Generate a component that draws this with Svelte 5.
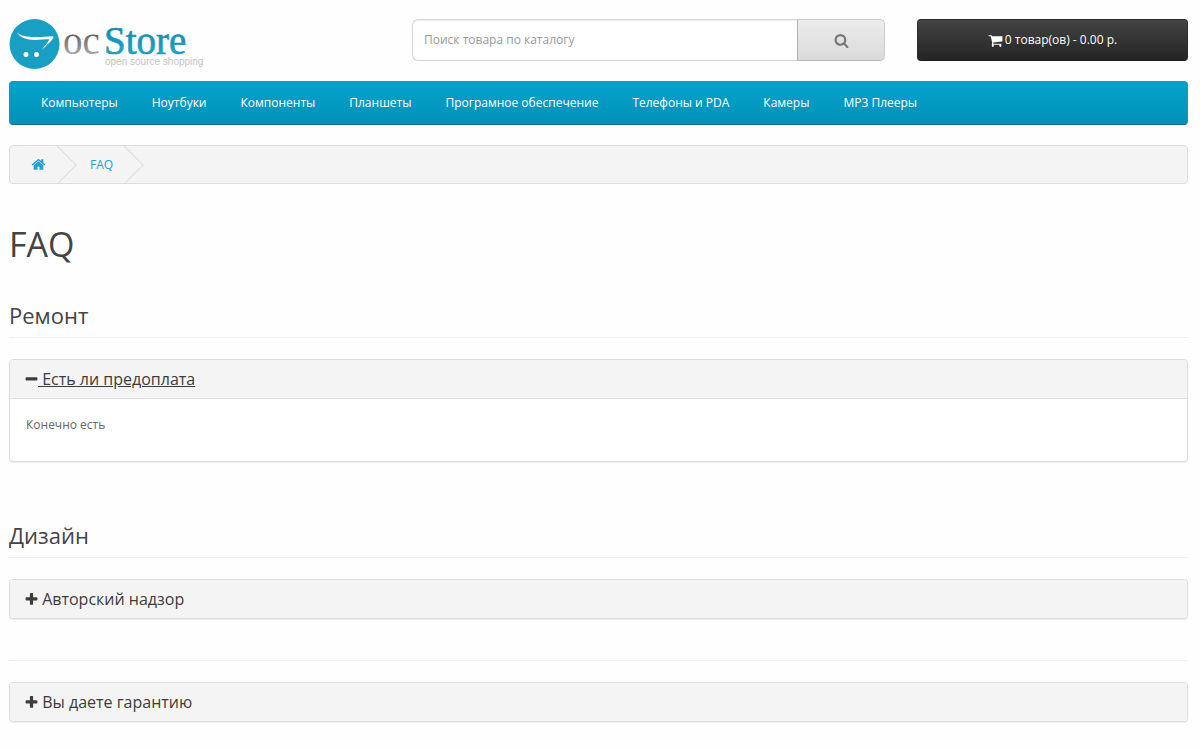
<script>
	const categories = [
		'Компьютеры',
		'Ноутбуки',
		'Компоненты',
		'Планшеты',
		'Програмное обеспечение',
		'Телефоны и PDA',
		'Камеры',
		'MP3 Плееры'
	];

	let sections = $state([
		{ title: 'Ремонт', question: 'Есть ли предоплата', answer: 'Конечно есть', open: true },
		{ title: 'Дизайн', question: 'Авторский надзор', answer: '', open: false },
		{ title: '', question: 'Вы даете гарантию', answer: '', open: false }
	]);

	let search = $state('');

	const icons = {
		search: 'M1216 832q0-185-131.5-316.5T768 384 451.5 515.5 320 832t131.5 316.5T768 1280t316.5-131.5T1216 832zm512 832q0 52-38 90t-90 38q-54 0-90-38l-343-342q-179 124-399 124-143 0-273.5-55.5t-225-150-150-225T64 832t55.5-273.5 150-225 225-150T768 128t273.5 55.5 225 150 150 225T1472 832q0 220-124 399l343 343q37 37 37 90z',
		cart: 'M704 1536q0 52-38 90t-90 38-90-38-38-90 38-90 90-38 90 38 38 90zm896 0q0 52-38 90t-90 38-90-38-38-90 38-90 90-38 90 38 38 90zm128-1088v512q0 24-16.5 42.5T1671 1024L627 1146q13 60 13 70 0 16-24 64h920q26 0 45 19t19 45-19 45-45 19H512q-26 0-45-19t-19-45q0-11 8-31.5t16-36 21.5-40T509 1207L332 384H128q-26 0-45-19t-19-45 19-45 45-19h256q16 0 28.5 6.5T432 278t13 24.5 8 26 5.5 29.5 4.5 26h1201q26 0 45 19t19 45z',
		home: 'M1472 992v480q0 26-19 45t-45 19h-384v-384h-256v384H384q-26 0-45-19t-19-45V992q0-1 .5-3t.5-3l575-474 575 474q1 2 1 6zm223-69l-62 74q-8 9-21 11h-3q-13 0-21-7L896 424l-692 577q-12 8-24 7-13-2-21-11l-62-74q-8-10-7-23.5t11-21.5l719-599q32-26 76-26t76 26l244 204V288q0-14 9-23t23-9h192q14 0 23 9t9 23v408l219 182q10 8 11 21.5t-7 23.5z',
		plus: 'M1600 736v192q0 40-28 68t-68 28h-416v416q0 40-28 68t-68 28H800q-40 0-68-28t-28-68v-416H288q-40 0-68-28t-28-68V736q0-40 28-68t68-28h416V224q0-40 28-68t68-28h192q40 0 68 28t28 68v416h416q40 0 68 28t28 68z',
		minus: 'M1600 736v192q0 40-28 68t-68 28H288q-40 0-68-28t-28-68V736q0-40 28-68t68-28h1216q40 0 68 28t28 68z'
	};
</script>

{#snippet icon(name)}
	<svg class="icon" viewBox="0 0 1792 1792" aria-hidden="true"><path d={icons[name]} /></svg>
{/snippet}

<div class="container">
	<header>
		<a class="logo" href="#home" aria-label="ocStore">
			<svg width="200" height="51" viewBox="0 0 200 51">
				<defs>
					<linearGradient id="grey" x1="0" y1="0" x2="0" y2="1">
						<stop offset="0.3" stop-color="#5c5c5c" />
						<stop offset="0.8" stop-color="#a5a5a5" />
					</linearGradient>
					<linearGradient id="blue" x1="0" y1="0" x2="0" y2="1">
						<stop offset="0.2" stop-color="#1388a8" />
						<stop offset="0.8" stop-color="#1ba6cc" />
					</linearGradient>
				</defs>
				<circle cx="25.5" cy="25" r="25" fill="#1a9fc4" />
				<path d="M8 13.500C12 17 17 18 26 18C33 18 38 17.200 43.500 17.200C45.500 17.600 44.500 19.500 42 22L33 30.800C36 26 39.500 23 40.500 20.300C35 20.300 31 21 26 21C17 20.800 11 18.500 8 13.500Z" fill="#fff" />
				<circle cx="17" cy="35.500" r="2.500" fill="#fff" />
				<circle cx="27.500" cy="35.500" r="2.500" fill="#fff" />
				<text class="serif" x="54" y="35" fill="url(#grey)">oc</text>
				<text class="serif store" x="95" y="35" fill="url(#blue)">Store</text>
				<text class="tagline" x="96" y="46">open source shopping</text>
			</svg>
		</a>
		<form class="search" onsubmit={(e) => e.preventDefault()}>
			<input type="text" aria-label="Поиск" placeholder="Поиск товара по каталогу" bind:value={search} />
			<button type="submit" aria-label="Найти">{@render icon('search')}</button>
		</form>
		<button class="cart" type="button">{@render icon('cart')} 0 товар(ов) - 0.00 р.</button>
	</header>

	<nav class="menu">
		{#each categories as category}
			<a href="#category">{category}</a>
		{/each}
	</nav>

	<ul class="breadcrumb">
		<li><a href="#home" aria-label="Главная">{@render icon('home')}</a></li>
		<li><a href="#faq">FAQ</a></li>
	</ul>

	<main>
		<h1>FAQ</h1>
		{#each sections as section}
			<section>
				<div class="section-head">
					{#if section.title}<h2>{section.title}</h2>{/if}
				</div>
				<div class="panel">
					<h3>
						<button type="button" aria-expanded={section.open} onclick={() => (section.open = !section.open)}>
							{@render icon(section.open ? 'minus' : 'plus')}<span class:active={section.open}>&nbsp;{section.question}</span>
						</button>
					</h3>
					{#if section.open}
						<div class="panel-body">{section.answer}</div>
					{/if}
				</div>
			</section>
		{/each}
	</main>
</div>

<style>
	:global(body) {
		background: #fefefe;
	}
	* {
		box-sizing: border-box;
	}
	.container {
		padding: 19px 12px 20px 9px;
		font: 12px/20px "Open Sans", sans-serif;
		color: #666;
	}
	button, input {
		font: inherit;
	}
	button {
		cursor: pointer;
	}
	a {
		color: #23a1d1;
		text-decoration: none;
	}
	.icon {
		width: 15px;
		height: 15px;
		fill: currentColor;
		flex: none;
	}

	header {
		display: grid;
		grid-template-columns: 371fr 473fr 271fr;
		gap: 32px;
		align-items: start;
		margin-bottom: 11px;
	}
	.logo svg {
		display: block;
	}
	.serif {
		font-family: "Liberation Serif", serif;
		font-size: 39px;
	}
	.store {
		stroke: #1796b9;
		stroke-width: 0.6px;
	}
	.tagline {
		font-family: "Liberation Sans", sans-serif;
		font-size: 10px;
		fill: #c4c4c4;
	}
	.search {
		display: flex;
		height: 42px;
	}
	.search input {
		flex: 1;
		min-width: 0;
		padding: 0 11px;
		border: 1px solid #d6d6d6;
		border-right: 0;
		border-radius: 6px 0 0 6px;
		background: #fff;
		box-shadow: inset 0 1px 1px rgba(0, 0, 0, 0.07);
		color: #555;
	}
	.search input::placeholder {
		color: #999;
		opacity: 1;
	}
	.search button {
		display: flex;
		align-items: center;
		justify-content: center;
		width: 88px;
		border: 1px solid #ccc;
		border-left-color: #b0b0b0;
		border-bottom-color: #bbb;
		border-radius: 0 5px 5px 0;
		background: linear-gradient(#ececec, #dadada);
		color: #777;
	}
	.cart {
		display: flex;
		align-items: center;
		justify-content: center;
		gap: 2px;
		height: 42px;
		border: 1px solid #2c2c2c;
		border-bottom-color: #1c1c1c;
		border-radius: 4px;
		background: linear-gradient(#444, #242424);
		color: #fff;
	}

	.menu {
		display: flex;
		flex-wrap: wrap;
		min-height: 44px;
		padding: 0 14px;
		border: 1px solid #1b96bb;
		border-bottom-color: #15718d;
		border-radius: 4px;
		background: linear-gradient(#04a2cd, #0291b8);
	}
	.menu a {
		padding: 11px 17px;
		color: #fff;
	}

	.breadcrumb {
		display: flex;
		height: 39px;
		margin: 20px 0 40px;
		padding: 0 7px;
		border: 1px solid #ddd;
		border-radius: 4px;
		background: #f4f4f4;
		list-style: none;
		overflow: hidden;
	}
	.breadcrumb li {
		position: relative;
		display: flex;
		align-items: center;
		padding: 0 30px 0 14px;
	}
	.breadcrumb li::after {
		content: "";
		position: absolute;
		top: 5px;
		right: 5px;
		width: 27px;
		height: 27px;
		border: solid #ddd;
		border-width: 0 1px 1px 0;
		transform: rotate(-45deg);
	}
	.breadcrumb a {
		display: flex;
	}

	h1, h2, h3 {
		margin: 0;
		font-weight: 400;
		color: #444;
	}
	h1 {
		font-size: 34px;
		line-height: 40px;
	}
	.section-head {
		margin-bottom: 21px;
		border-bottom: 1px solid #eee;
	}
	h2 {
		padding: 20px 0 10px;
		font-size: 22px;
		line-height: 24px;
	}
	section {
		margin-top: 41px;
	}
	section:first-of-type {
		margin-top: 19px;
	}
	.panel {
		border: 1px solid #ddd;
		border-radius: 4px;
		background: #fff;
		box-shadow: 0 1px 1px rgba(0, 0, 0, 0.07);
	}
	h3 button {
		display: flex;
		align-items: center;
		width: 100%;
		height: 38px;
		padding: 0 14px;
		border: 0;
		border-radius: 3px;
		background: #f4f4f4;
		color: #3c3c3c;
		font-size: 16px;
		text-align: left;
	}
	h3 .icon {
		margin-right: -1px;
	}
	.active {
		text-decoration: underline;
	}
	.panel-body {
		padding: 16px 16px 26px;
		border-top: 1px solid #ddd;
	}
</style>
